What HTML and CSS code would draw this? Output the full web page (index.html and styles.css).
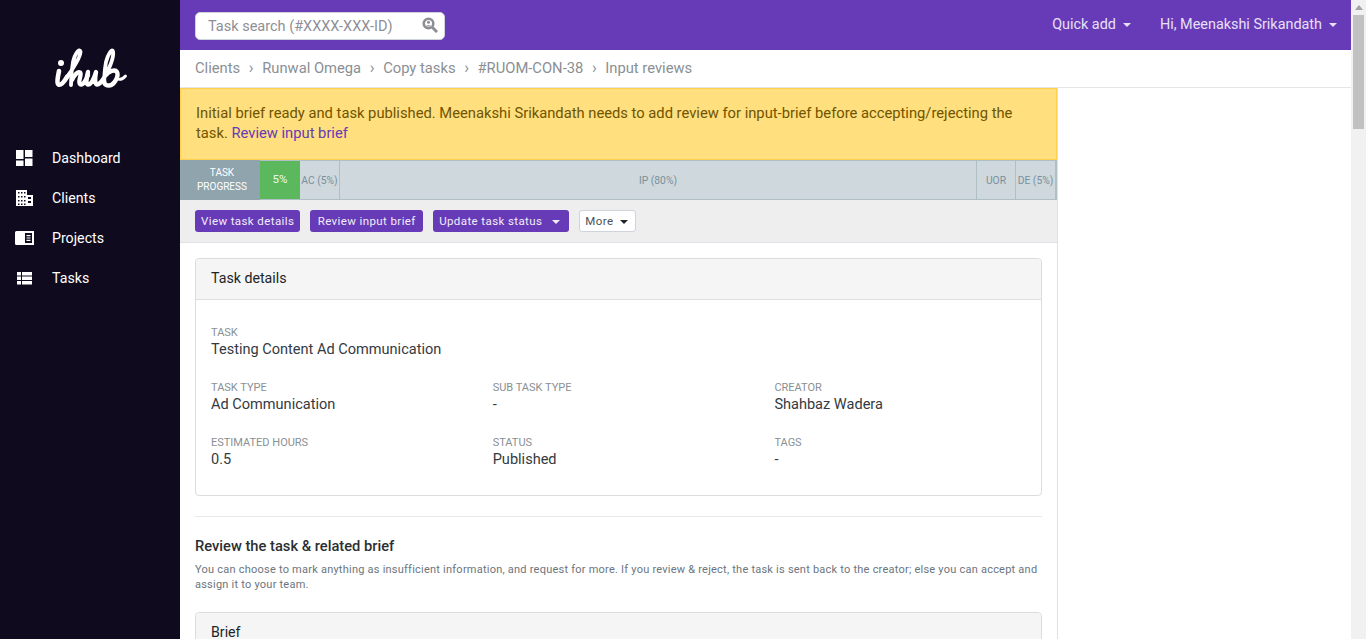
FILE: index.html
```html
<!DOCTYPE html>
<html lang="en">
<head>
<meta charset="utf-8">
<title>ihub</title>
<link rel="stylesheet" href="styles.css">
</head>
<body>
<div class="app">
  <aside class="sidebar">
    <div class="logo">
      <svg width="74" height="44" viewBox="0 0 74 44" role="img" aria-label="ihub logo" fill="none" stroke="#fff" stroke-linecap="round" stroke-linejoin="round">
        <circle cx="8" cy="16" r="3" fill="#fff" stroke="none"/>
        <path stroke-width="4.600" d="M6 24 C5 29 3.500 36 5.500 37.500 C8 38.500 11 35 14 30"/>
        <path stroke-width="3.800" d="M14 30 C20 22 28 9 27.500 4.500 C26.500 1 22 6 20 15 C18.500 23 18 31 18 38"/>
        <path stroke-width="4.400" d="M19 33 C21 28 25 24 27 25.500 C29.500 27 24.500 34 27 37 C29 39 32.500 35 35 28"/>
        <path stroke-width="4.400" d="M35 25 C33.500 31 32.500 37 35 37.500 C38 38 41 32 43 25 C42 31 41.500 37 44 37.500 C46 37.500 48.500 35 51 31"/>
        <path stroke-width="3.800" d="M51 31 C56 22 61 10 60 4.500 C59 1 55 7 53 15 C51.500 24 51 31 51.500 36"/>
        <path stroke-width="4.400" d="M53 28 C56 24 62 22 64 25 C66 29 61.500 38 56 38.500 C53 38.500 51.500 37 51.500 36"/>
        <path stroke-width="2.800" d="M64 32 C67 33 70 32 72.500 29"/>
      </svg>
    </div>
    <nav class="nav">
      <a class="nav-item">
        <svg class="nav-icon" viewBox="0 0 17 16"><path fill="#fff" d="M0 0h7.500v9H0zM9 0h7.500v7H9zM9 8.500h7.500V16H9zM0 10.500h7.500V16H0z"/></svg>
        <span>Dashboard</span>
      </a>
      <a class="nav-item">
        <svg class="nav-icon" viewBox="0 0 17 16"><path fill="#fff" fill-rule="evenodd" d="M0 0h11v5h6v11H0zM2 2v1.500h1.500V2zm3 0v1.500h1.500V2zm3 0v1.500h1.500V2zM2 6v1.500h1.500V6zm3 0v1.500h1.500V6zm3 0v1.500h1.500V6zm4 1v2h3V7zM2 10v1.500h1.500V10zm3 0v1.500h1.500V10zm3 0v1.500h1.500V10zm4 1v2h3v-2zM2 13.500V15h1.500v-1.500zm3 0V15h1.500v-1.500zm3 0V15h1.500v-1.500z"/></svg>
        <span>Clients</span>
      </a>
      <a class="nav-item">
        <svg class="nav-icon nav-icon-wide" viewBox="0 0 19 16"><path fill="#fff" fill-rule="evenodd" d="M1.500 1H19v14H1.500A1.500 1.500 0 0 1 0 13.500v-11A1.500 1.500 0 0 1 1.500 1zM10 3v10h7V3zm1.500 2h4v1.200h-4zm0 2.400h4v1.200h-4zm0 2.400h4V11h-4z"/></svg>
        <span>Projects</span>
      </a>
      <a class="nav-item">
        <svg class="nav-icon" viewBox="0 0 17 16"><path fill="#fff" d="M1 2h4v3.500H1zM6 2h10v3.500H6zM1 6.500h4V10H1zM6 6.500h10V10H6zM1 11h4v3.500H1zM6 11h10v3.500H6z"/></svg>
        <span>Tasks</span>
      </a>
    </nav>
  </aside>
  <div class="main">
    <header class="topbar">
      <div class="search">
        <span class="search-text">Task search (#XXXX-XXX-ID)</span>
        <svg class="search-icon" viewBox="0 0 16 16"><circle cx="6.500" cy="6.500" r="4.800" fill="none" stroke="#8e8e96" stroke-width="2.600"/><circle cx="6.500" cy="5.300" r="1.500" fill="#8e8e96"/><path d="M3.800 9.500c.6-1.600 4.800-1.600 5.400 0z" fill="#8e8e96"/><path d="M10.500 10.500 15 15" stroke="#8e8e96" stroke-width="3"/></svg>
      </div>
      <div class="top-links">
        <span class="top-link">Quick add<i class="caret"></i></span>
        <span class="top-link">Hi, Meenakshi Srikandath<i class="caret"></i></span>
      </div>
    </header>
    <div class="crumbs">
      <span>Clients</span><b>›</b><span>Runwal Omega</span><b>›</b><span>Copy tasks</span><b>›</b><span>#RUOM-CON-38</span><b>›</b><span>Input reviews</span>
    </div>
    <div class="column">
      <div class="alert">Initial brief ready and task published. Meenakshi Srikandath needs to add review for input-brief before accepting/rejecting the task. <a>Review input brief</a></div>
      <div class="progress">
        <div class="p-label">TASK<br>PROGRESS</div>
        <div class="p-bar">
          <div class="p-done">5%</div>
          <div class="p-seg p-ac">AC (5%)</div>
          <div class="p-seg p-ip">IP (80%)</div>
          <div class="p-seg p-uor">UOR</div>
          <div class="p-seg p-de">DE (5%)</div>
        </div>
      </div>
      <div class="actions">
        <button class="btn">View task details</button>
        <button class="btn btn-wide">Review input brief</button>
        <button class="btn">Update task status<i class="caret caret-btn"></i></button>
        <button class="btn btn-light">More<i class="caret caret-btn"></i></button>
      </div>
      <div class="body">
        <section class="card">
          <div class="card-head">Task details</div>
          <div class="card-body">
            <div class="field"><label>TASK</label><p>Testing Content Ad Communication</p></div>
            <div class="grid">
              <div class="field"><label>TASK TYPE</label><p>Ad Communication</p></div>
              <div class="field"><label>SUB TASK TYPE</label><p>-</p></div>
              <div class="field"><label>CREATOR</label><p>Shahbaz Wadera</p></div>
              <div class="field"><label>ESTIMATED HOURS</label><p>0.5</p></div>
              <div class="field"><label>STATUS</label><p>Published</p></div>
              <div class="field"><label>TAGS</label><p>-</p></div>
            </div>
          </div>
        </section>
        <hr class="rule">
        <h2 class="title">Review the task &amp; related brief</h2>
        <p class="note">You can choose to mark anything as insufficient information, and request for more. If you review &amp; reject, the task is sent back to the creator; else you can accept and assign it to your team.</p>
        <section class="card card-cut">
          <div class="card-head">Brief</div>
        </section>
      </div>
    </div>
  </div>
  <div class="scrollbar">
    <div class="sb-arrow"></div>
    <div class="sb-thumb"></div>
  </div>
</div>
</body>
</html>
```
FILE: styles.css
```css
* { box-sizing: border-box; }
html, body { margin: 0; height: 100%; overflow: hidden; }
body { font-family: Roboto, "Noto Sans", sans-serif; font-size: 14px; color: #212529; background: #fff; }
.app { display: flex; height: 639px; overflow: hidden; }
.sidebar { width: 180px; flex: none; background: #0f0a1e; color: #fff; }
.logo { height: 138px; padding: 47px 0 0 53px; }
.nav { display: flex; flex-direction: column; }
.nav-item { height: 40px; display: flex; align-items: center; padding-left: 16px; font-size: 14.200px; color: #fff; }
.nav-item span { margin-left: 19px; }
.nav-icon { width: 17px; height: 16px; flex: none; }
.nav-icon-wide { width: 19px; margin-left: -1px; margin-right: -1px; }
.main { width: 1171px; flex: none; display: flex; flex-direction: column; }
.topbar { height: 50px; flex: none; background: #673ab7; display: flex; justify-content: space-between; align-items: center; padding: 0 14px 0 15px; }
.search { width: 250px; height: 28px; margin-top: 2px; background: #fff; border: 1px solid #ced4da; border-radius: 5px; display: flex; align-items: center; justify-content: space-between; padding: 0 6px 0 12px; }
.search-text { font-size: 14.500px; color: #8f8f96; }
.search-icon { width: 16px; height: 16px; margin-top: -2px; }
.top-links { display: flex; gap: 29px; margin-top: -2px; }
.top-link { font-size: 14.400px; color: #e8e0f6; }
.caret { display: inline-block; width: 0; height: 0; margin-left: 7px; vertical-align: 2px; border-top: 4px solid currentColor; border-left: 4px solid transparent; border-right: 4px solid transparent; }
.crumbs { height: 38px; flex: none; display: flex; align-items: center; padding: 0 0 2px 15px; border-bottom: 1px solid #e6e6e6; color: #8a8f94; font-size: 14.750px; }
.crumbs b { font-weight: 400; margin: 0 8px; width: 6px; text-align: center; font-size: 16px; }
.column { width: 878px; flex: 1; border-right: 1px solid #dee2e6; min-height: 0; }
.alert { height: 72px; padding: 14px 24px 0 15px; background: #ffdf7e; border: 1px solid #ffd04e; color: #705400; font-size: 14.740px; line-height: 20px; }
.alert a { color: #673ab7; }
.progress { height: 40px; display: flex; background: #cfd8dc; }
.p-label { width: 80px; background: #90a4ae; color: #fff; font-size: 10px; line-height: 14px; text-align: center; padding: 6px 0 0 4px; }
.p-bar { flex: 1; display: flex; align-items: stretch; border-top: 1px solid #b0bec5; border-bottom: 1px solid #b0bec5; border-right: 2px solid #b0bec5; }
.p-done { width: 40px; background: #5cb85c; color: #eefaee; font-size: 11.500px; display: flex; align-items: center; justify-content: center; padding-bottom: 2px; }
.p-seg { display: flex; align-items: center; justify-content: center; font-size: 10.300px; color: #78909c; border-right: 1px solid #b0bec5; white-space: nowrap; }
.p-ac { width: 40px; }
.p-ip { flex: 1; }
.p-uor { width: 39px; }
.p-de { width: 39px; border-right: 0; }
.actions { height: 43px; background: #eee; border-bottom: 1px solid #dee2e6; display: flex; gap: 10px; align-items: flex-start; padding: 10px 15px 0; }
.btn { height: 22px; padding: 0 6px; background: #673ab7; color: #f1edf8; border: 0; border-radius: 3px; font: 11.500px Roboto, sans-serif; letter-spacing: .4px; }
.btn-wide { padding: 0 7.400px; }
.btn-light { background: #fff; color: #495057; border: 1px solid #ced4da; padding: 0 5px; }
.caret-btn { margin-left: 10px; margin-right: 3px; vertical-align: 1px; }
.btn-light .caret-btn { margin-left: 7px; margin-right: 2px; color: #212529; }
.body { padding: 15px 15px 0; }
.card { border: 1px solid #dcdcdc; border-radius: 4px; height: 238px; }
.card-head { height: 41px; padding: 0 15px 2px; display: flex; align-items: center; background: #f5f5f5; border-bottom: 1px solid #dfdfdf; font-size: 14.200px; border-radius: 4px 4px 0 0; }
.card-body { padding: 26px 15px 0; }
.grid { display: grid; grid-template-columns: repeat(3, 281.700px); row-gap: 17px; margin-top: 17px; }
.field label { display: block; font-size: 11px; line-height: 14px; color: #8a8f94; }
.field p { margin: 0; font-size: 14.550px; line-height: 20px; color: #343a40; height: 24px; }
.rule { margin: 20px 0 0; border: 0; border-top: 1px solid #e9e9e9; }
.title { margin: 20px 0 0; font-size: 14.700px; line-height: 18px; font-weight: 500; color: #2b2f33; }
.note { margin: 7px 0 0; font-size: 11px; line-height: 15px; color: #6c757d; letter-spacing: .23px; }
.card-cut { margin-top: 20px; }
.scrollbar { width: 15px; flex: none; background: #f1f1f1; }
.sb-arrow { height: 15px; display: flex; justify-content: center; padding-top: 5px; }
.sb-arrow::before { content: ""; width: 0; height: 0; border-bottom: 5px solid #a3a3a3; border-left: 4px solid transparent; border-right: 4px solid transparent; }
.sb-thumb { height: 114px; margin: 0 2px; background: #c1c1c1; }
```
